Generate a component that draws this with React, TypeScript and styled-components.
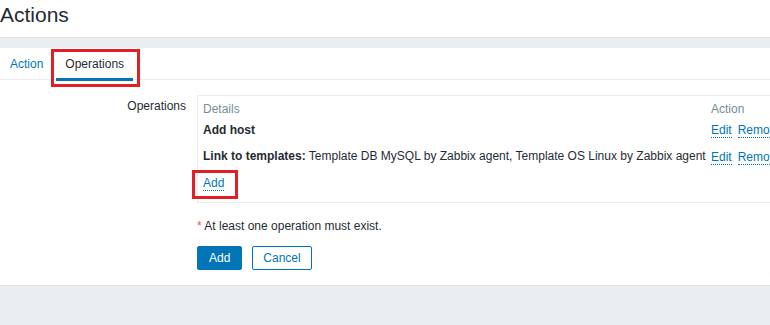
import React from 'react'
import styled, { createGlobalStyle } from 'styled-components'

const GlobalStyle = createGlobalStyle`
  html, body {
    margin: 0;
    padding: 0;
    background: #ebeef0;
    overflow: hidden;
  }
  body {
    font-family: 'Liberation Sans', Arial, sans-serif;
    font-size: 12px;
    color: #1f2c33;
  }
`

const operations = [
  { label: 'Add host', text: '' },
  {
    label: 'Link to templates:',
    text: 'Template DB MySQL by Zabbix agent, Template OS Linux by Zabbix agent',
  },
]

const App: React.FC = () => {
  return (
    <>
      <GlobalStyle />
      <Header>
        <Title>Actions</Title>
      </Header>
      <Panel>
        <TabBar>
          <Tab>Action</Tab>
          <Tab active>
            Operations
            <Highlight />
          </Tab>
        </TabBar>
        <Form>
          <FormRow>
            <FieldLabel>Operations</FieldLabel>
            <OpsBox>
              <OpsGrid>
                <HeadCell>Details</HeadCell>
                <HeadCell>Action</HeadCell>
                {operations.map((op) => (
                  <React.Fragment key={op.label}>
                    <Cell>
                      <strong>{op.label}</strong>
                      {op.text && ' ' + op.text}
                    </Cell>
                    <Cell>
                      <Link>Edit</Link>
                      <Link>Remove</Link>
                    </Cell>
                  </React.Fragment>
                ))}
              </OpsGrid>
              <AddRow>
                <Marked>
                  <Link>Add</Link>
                  <Highlight />
                </Marked>
              </AddRow>
            </OpsBox>
          </FormRow>
          <FormRow>
            <FieldLabel />
            <Note>
              <Required>*</Required> At least one operation must exist.
            </Note>
          </FormRow>
          <FormRow>
            <FieldLabel />
            <Buttons>
              <Button primary>Add</Button>
              <Button>Cancel</Button>
            </Buttons>
          </FormRow>
        </Form>
      </Panel>
    </>
  )
}

const Header = styled.header`
  background: #fff;
  height: 38px;
  padding-top: 4px;
  box-sizing: border-box;
  border-bottom: 1px solid #dfe4e7;
`

const Title = styled.h1`
  margin: 0;
  font-size: 21px;
  line-height: 21px;
  font-weight: normal;
`

const Panel = styled.main`
  margin-top: 10px;
  background: #fff;
  border-bottom: 1px solid #dfe4e7;
  padding-bottom: 15px;
`

const TabBar = styled.nav`
  display: flex;
  gap: 4px;
  height: 31px;
  padding-left: 1px;
  border-bottom: 1px solid #ebeef0;
`

const Tab = styled.div<{ active?: boolean }>`
  position: relative;
  display: flex;
  align-items: center;
  padding: 1px 9px 0;
  color: ${(p) => (p.active ? '#1f2c33' : '#0275b8')};
  border-bottom: 3px solid ${(p) => (p.active ? '#0275b8' : 'transparent')};
  margin-bottom: -2px;
`

// red annotation frame laid over a tab or link
const Highlight = styled.span`
  position: absolute;
  top: 1px;
  left: -5px;
  right: -7px;
  bottom: -9px;
  border: 3px solid #e31e24;
  pointer-events: none;
`

const Form = styled.div`
  padding-top: 15px;
`

const FormRow = styled.div`
  display: flex;
  align-items: flex-start;
  & + & {
    margin-top: 16px;
  }
  &:last-child {
    margin-top: 13px;
  }
`

const FieldLabel = styled.div`
  width: 186px;
  flex: none;
  padding: 4px 11px 0 0;
  line-height: 14px;
  text-align: right;
`

const OpsBox = styled.div`
  width: 640px;
  flex: none;
  border: 1px solid #ebeef0;
  padding: 0 5px 6px;
`

const OpsGrid = styled.div`
  display: grid;
  grid-template-columns: 508px auto;
  line-height: 14px;
`

const HeadCell = styled.div`
  color: #768d99;
  padding: 6px 0 1px;
`

const Cell = styled.div`
  padding: 6px 0;
  white-space: nowrap;
  strong {
    font-weight: bold;
  }
  & + & + & + & {
    padding-top: 7px;
    padding-bottom: 5px;
  }
`

const Link = styled.a`
  color: #0275b8;
  border-bottom: 1px dotted #0275b8;
  cursor: pointer;
  & + & {
    margin-left: 6px;
  }
`

const AddRow = styled.div`
  padding: 7px 0 6px;
  line-height: 14px;
`

const Marked = styled.span`
  position: relative;
  display: inline-block;
  ${Highlight} {
    top: -6px;
    left: -11px;
    right: -14px;
    bottom: -9px;
  }
`

const Note = styled.div`
  line-height: 14px;
`

const Required = styled.span`
  color: #e45959;
`

const Buttons = styled.div`
  display: flex;
  gap: 10px;
`

const Button = styled.button<{ primary?: boolean }>`
  height: 24px;
  padding: 0 ${(p) => (p.primary ? '11px' : '10px')};
  font-family: inherit;
  font-size: 12px;
  border-radius: 2px;
  border: 1px solid #0275b8;
  background: ${(p) => (p.primary ? '#0275b8' : '#fff')};
  color: ${(p) => (p.primary ? '#fff' : '#0275b8')};
`

export default App
